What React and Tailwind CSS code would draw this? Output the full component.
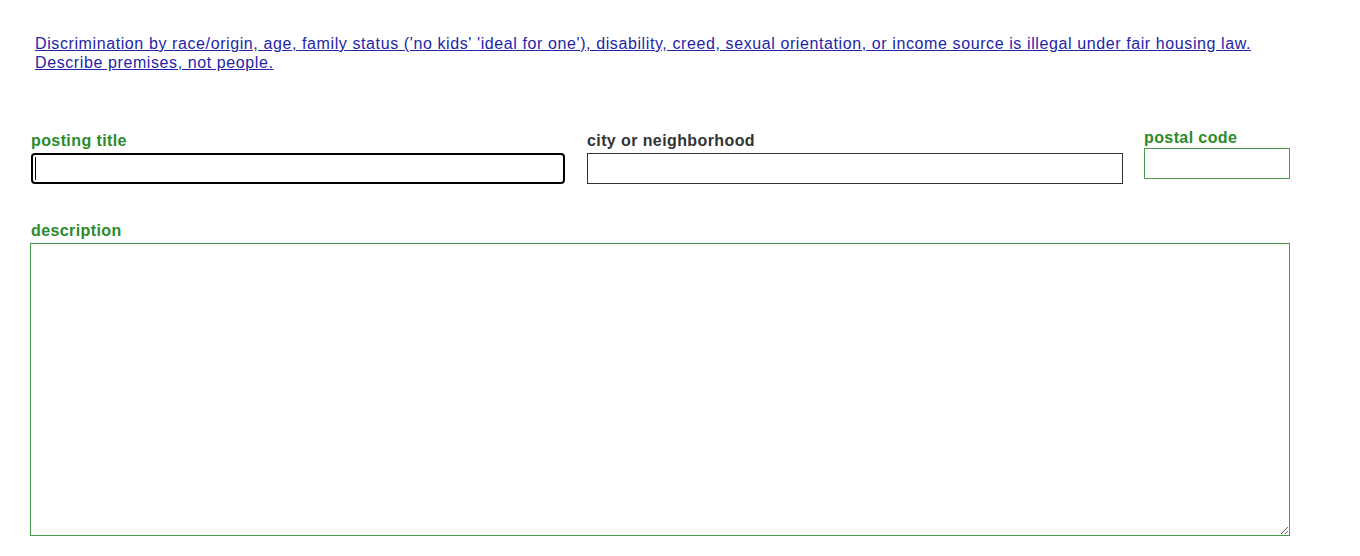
import React from 'react';

const FONT = { fontFamily: '"Liberation Sans", Arial, sans-serif' };

// label above a field; green = required
function FieldLabel({ children, required }) {
  return (
    <label
      className={`block text-[16px] font-bold leading-[18px] tracking-[0.4px] ${
        required ? 'text-[#2b8a2b]' : 'text-[#333]'
      }`}
    >
      {children}
    </label>
  );
}

export default function App() {
  return (
    <div className="min-h-[556px] bg-white" style={FONT}>
      <div className="pl-[35px] pt-[34px] text-[16px] leading-[19px] tracking-[0.6px]">
        <a href="#" className="text-[#2424a8] underline underline-offset-1">
          Discrimination by race/origin, age, family status ('no kids' 'ideal for one'), disability, creed, sexual orientation, or income source is illegal under fair housing law.
          <br />
          Describe premises, not people.
        </a>
      </div>

      <div className="flex items-end pl-[31px] pt-[57px]">
        <div className="flex flex-col gap-[3px]">
          <FieldLabel required>posting title</FieldLabel>
          <div className="relative h-[31px] w-[534px] rounded-[4px] border-2 border-black">
            {/* text caret */}
            <span className="absolute left-[2px] top-[2px] h-[23px] w-px bg-black" />
          </div>
        </div>

        <div className="ml-[22px] flex flex-col gap-[3px]">
          <FieldLabel>city or neighborhood</FieldLabel>
          <input
            type="text"
            className="h-[31px] w-[536px] border border-[#333] outline-none"
          />
        </div>

        <div className="mb-[5px] ml-[21px] flex flex-col gap-[1px]">
          <FieldLabel required>postal code</FieldLabel>
          <input
            type="text"
            className="h-[31px] w-[146px] border border-[#4a9a4a] outline-none"
          />
        </div>
      </div>

      <div className="pl-[31px] pt-[38px]">
        <FieldLabel required>description</FieldLabel>
        <textarea
          className="mt-[3px] -ml-px block h-[293px] w-[1260px] border border-[#4a9a4a] outline-none"
        />
      </div>
    </div>
  );
}
